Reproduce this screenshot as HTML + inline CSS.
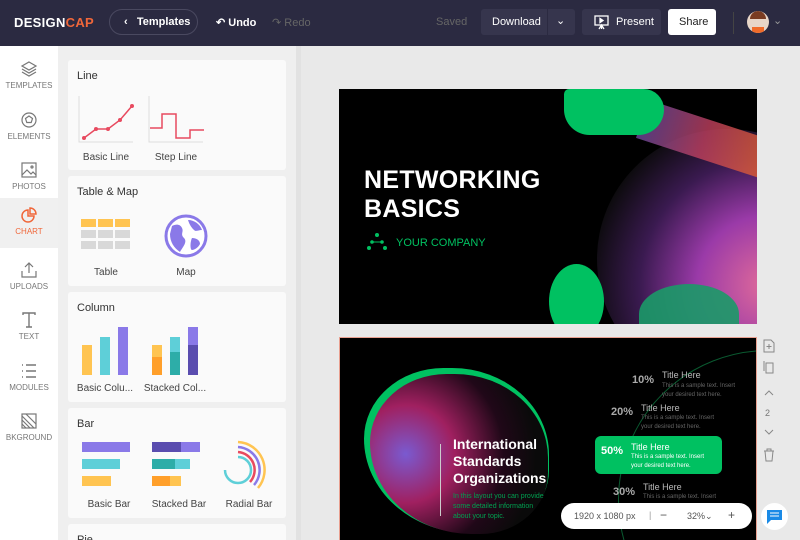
<!DOCTYPE html>
<html style="overflow:hidden"><head><meta charset="utf-8"><style>
*{box-sizing:border-box;margin:0;padding:0}
body{width:800px;height:540px;overflow:hidden;font-family:"Liberation Sans",sans-serif;background:#e9e9e9;position:relative}
.top{position:absolute;left:0;top:0;width:800px;height:46px;background:#2b2a41;color:#fff;font-size:11px}
.top>*{position:absolute}
.side{position:absolute;left:0;top:46px;width:58px;height:494px;background:#fff}
.si{position:absolute;left:0;width:58px;height:50px;text-align:center;font-size:8px;color:#777}
.si svg{display:block;margin:8px auto 3px}
.panel{position:absolute;left:58px;top:46px;width:238px;height:494px;background:#efefef;overflow:hidden}
.card{position:absolute;left:10px;width:218px;background:#fafafa;border-radius:3px}
.card h4{font-weight:normal;font-size:11px;color:#333;position:absolute;left:9px;top:10px}
.lab{position:absolute;font-size:10px;color:#444;text-align:center;width:70px}
.abs{position:absolute}
</style></head><body>
<div class="top">
 <div style="left:14px;top:15px;font-size:13px;font-weight:bold;letter-spacing:0.3px">DESIGN<span style="color:#f0673a">CAP</span></div>
 <div style="left:109px;top:9px;width:89px;height:26px;border:1px solid #4a4960;border-radius:13px;padding:6px 0 0 14px;font-weight:bold">‹&nbsp;&nbsp;&nbsp;Templates</div>
 <div style="left:216px;top:16px;font-weight:bold">↶ Undo</div>
 <div style="left:272px;top:16px;color:#666">↷ Redo</div>
 <div style="left:436px;top:16px;color:#666">Saved</div>
 <div style="left:481px;top:9px;width:94px;height:26px;background:#36354d;border-radius:3px;padding:7px 0 0 11px">Download<span style="position:absolute;left:66px;top:0;width:1px;height:26px;background:#2b2a41"></span><span style="position:absolute;left:75px;top:5px">⌄</span></div>
 <div style="left:582px;top:9px;width:79px;height:26px;background:#36354d;border-radius:3px;padding:7px 0 0 34px">Present<svg style="position:absolute;left:12px;top:6px" width="15" height="15" viewBox="0 0 15 15" fill="none" stroke="#fff" stroke-width="1.3"><rect x="1" y="1" width="13" height="9"/><path d="M6 3.5v4l3-2z" fill="#fff"/><path d="M7.5 10v4M5 14l2.5-4 2.5 4"/></svg></div>
 <div style="left:668px;top:9px;width:48px;height:26px;background:#fff;color:#222;border-radius:3px;padding:7px 0 0 11px">Share</div>
 <div style="left:733px;top:12px;width:1px;height:22px;background:#444"></div>
 <div style="left:747px;top:11px;width:22px;height:22px;border-radius:50%;background:#e8d6c8;overflow:hidden"><div style="position:absolute;left:3px;top:0;width:16px;height:8px;background:#7a3c22;border-radius:8px 8px 0 0"></div><div style="position:absolute;left:5px;top:16px;width:12px;height:8px;background:#f06b2a"></div></div>
 <div style="left:773px;top:14px;color:#999">⌄</div>
</div>
<div class="side">
 <div class="si" style="top:6px"><svg width="18" height="18" viewBox="0 0 18 18" fill="none" stroke="#777" stroke-width="1.2"><path d="M9 2l7 4-7 4-7-4z M2 9l7 4 7-4 M2 12l7 4 7-4"/></svg>TEMPLATES</div>
 <div class="si" style="top:57px"><svg width="18" height="18" viewBox="0 0 18 18" fill="none" stroke="#777" stroke-width="1.2"><circle cx="9" cy="9" r="7"/><path d="M9 5l3.5 2.5-1.3 4H6.8L5.5 7.5z"/></svg>ELEMENTS</div>
 <div class="si" style="top:107px"><svg width="18" height="18" viewBox="0 0 18 18" fill="none" stroke="#777" stroke-width="1.2"><rect x="2" y="2" width="14" height="14"/><path d="M2 14l5-5 4 4 2-2 3 3"/><circle cx="12" cy="6" r="1"/></svg>PHOTOS</div>
 <div class="si" style="top:152px;height:50px;background:#f0f0f0;color:#f0673a"><svg width="18" height="18" viewBox="0 0 18 18" fill="none" stroke="#f0673a" stroke-width="1.5"><path d="M8 4a6 6 0 1 0 6 6H8z"/><path d="M10 2a6 6 0 0 1 6 6h-6z"/></svg>CHART</div>
 <div class="si" style="top:207px"><svg width="18" height="18" viewBox="0 0 18 18" fill="none" stroke="#777" stroke-width="1.2"><path d="M9 12V2M5 6l4-4 4 4M2 10v6h14v-6"/></svg>UPLOADS</div>
 <div class="si" style="top:257px"><svg width="18" height="18" viewBox="0 0 18 18" fill="none" stroke="#777" stroke-width="1.4"><path d="M3 4V2h12v2M9 2v14M6 16h6"/></svg>TEXT</div>
 <div class="si" style="top:308px"><svg width="18" height="18" viewBox="0 0 18 18" fill="none" stroke="#777" stroke-width="1.4"><path d="M6 3h10M6 9h10M6 15h10M2 3h1M2 9h1M2 15h1"/></svg>MODULES</div>
 <div class="si" style="top:358px"><svg width="18" height="18" viewBox="0 0 18 18" fill="none" stroke="#777" stroke-width="1.2"><rect x="2" y="2" width="14" height="14"/><path d="M2 8l8 8M2 12l4 4M2 4l12 12M6 2l10 10"/></svg>BKGROUND</div>
</div>
<div class="panel">
 <div class="card" style="top:14px;height:110px"><h4>Line</h4>
  <svg class="abs" style="left:10px;top:36px" width="60" height="50"><path d="M1 0v46h54" stroke="#ddd" fill="none"/><path d="M6 42l12-9 12 0 12-9 12-14" stroke="#e84a5f" stroke-width="1.5" fill="none"/><g fill="#e84a5f"><circle cx="6" cy="42" r="2"/><circle cx="18" cy="33" r="2"/><circle cx="30" cy="33" r="2"/><circle cx="42" cy="24" r="2"/><circle cx="54" cy="10" r="2"/></g></svg>
  <svg class="abs" style="left:80px;top:36px" width="60" height="50"><path d="M1 0v46h54" stroke="#ddd" fill="none"/><path d="M2 32h12V18h14v24h14v-8h14" stroke="#e84a5f" stroke-width="1.5" fill="none"/></svg>
  <div class="lab" style="left:3px;top:92px">Basic Line</div><div class="lab" style="left:73px;top:92px">Step Line</div></div>
 <div class="card" style="top:130px;height:110px"><h4>Table &amp; Map</h4>
  <svg class="abs" style="left:13px;top:43px" width="52" height="35"><g fill="#ffc451"><rect x="0" y="0" width="15" height="8"/><rect x="17" y="0" width="15" height="8"/><rect x="34" y="0" width="15" height="8"/></g><g fill="#d8d8d8"><rect x="0" y="11" width="15" height="8"/><rect x="17" y="11" width="15" height="8"/><rect x="34" y="11" width="15" height="8"/><rect x="0" y="22" width="15" height="8"/><rect x="17" y="22" width="15" height="8"/><rect x="34" y="22" width="15" height="8"/></g></svg>
  <svg class="abs" style="left:96px;top:38px" width="44" height="44" viewBox="0 0 44 44"><circle cx="22" cy="22" r="20" fill="#fff" stroke="#8a79e8" stroke-width="3"/><path d="M8 12c4-2 8-2 10 2s-2 6 2 10-2 10-4 14c-6-4-10-10-10-18zM24 6c6 0 12 4 14 10-4 0-6 2-8 0s-4-4-6-10zM28 24c4 0 8 2 8 6-2 4-6 6-8 6s-2-8 0-12z" fill="#8a79e8"/></svg>
  <div class="lab" style="left:3px;top:91px">Table</div><div class="lab" style="left:83px;top:91px">Map</div></div>
 <div class="card" style="top:246px;height:110px"><h4>Column</h4>
  <svg class="abs" style="left:14px;top:35px" width="50" height="50"><rect x="0" y="18" width="10" height="30" fill="#ffc451"/><rect x="18" y="10" width="10" height="38" fill="#5ecfd8"/><rect x="36" y="0" width="10" height="48" fill="#8a79e8"/></svg>
  <svg class="abs" style="left:84px;top:35px" width="50" height="50"><rect x="0" y="18" width="10" height="12" fill="#ffc451"/><rect x="0" y="30" width="10" height="18" fill="#ff9f2a"/><rect x="18" y="10" width="10" height="15" fill="#5ecfd8"/><rect x="18" y="25" width="10" height="23" fill="#2dada8"/><rect x="36" y="0" width="10" height="18" fill="#8a79e8"/><rect x="36" y="18" width="10" height="30" fill="#5a4daf"/></svg>
  <div class="lab" style="left:2px;top:91px">Basic Colu...</div><div class="lab" style="left:72px;top:91px">Stacked Col...</div></div>
 <div class="card" style="top:362px;height:110px"><h4>Bar</h4>
  <svg class="abs" style="left:14px;top:34px" width="50" height="50"><rect x="0" y="0" width="48" height="10" fill="#8a79e8"/><rect x="0" y="17" width="38" height="10" fill="#5ecfd8"/><rect x="0" y="34" width="29" height="10" fill="#ffc451"/></svg>
  <svg class="abs" style="left:84px;top:34px" width="50" height="50"><rect x="0" y="0" width="29" height="10" fill="#5a4daf"/><rect x="29" y="0" width="19" height="10" fill="#8a79e8"/><rect x="0" y="17" width="23" height="10" fill="#2dada8"/><rect x="23" y="17" width="15" height="10" fill="#5ecfd8"/><rect x="0" y="34" width="18" height="10" fill="#ff9f2a"/><rect x="18" y="34" width="11" height="10" fill="#ffc451"/></svg>
  <svg class="abs" style="left:154px;top:32px" width="50" height="50" viewBox="0 0 50 50" fill="none" stroke-width="2.5"><path d="M16 2a28 28 0 0 1 20 46" stroke="#ffc451"/><path d="M16 7a23 23 0 0 1 16 38" stroke="#8a79e8"/><path d="M16 12a18 18 0 0 1 12 30" stroke="#e84a5f"/><path d="M16 17a13 13 0 1 1 -13 13" stroke="#5ecfd8"/></svg>
  <div class="lab" style="left:6px;top:91px">Basic Bar</div><div class="lab" style="left:76px;top:91px">Stacked Bar</div><div class="lab" style="left:146px;top:91px">Radial Bar</div></div>
 <div class="card" style="top:478px;height:30px"><h4>Pie</h4></div>
</div>
<div class="abs" style="left:296px;top:46px;width:5px;height:494px;background:#e2e2e2"></div>
<!-- slide 1 -->
<div class="abs" style="left:339px;top:89px;width:418px;height:235px;background:#000;overflow:hidden">
 <div class="abs" style="left:258px;top:40px;width:260px;height:260px;border-radius:50%;background:radial-gradient(circle at 65% 60%,#e06a9a 0%,#9a3aa8 30%,#3a1a50 55%,#0a0a0a 78%)"></div>
 <div class="abs" style="left:300px;top:30px;width:130px;height:40px;background:linear-gradient(90deg,#6a4aa0,#c04060,#e06030);transform:rotate(18deg);opacity:.8"></div>
 <div class="abs" style="left:225px;top:0;width:100px;height:46px;border-radius:10px 40px 50px 50px;background:#00c161"></div>
 <div class="abs" style="left:210px;top:175px;width:55px;height:75px;border-radius:50%;background:#00c161"></div>
 <div class="abs" style="left:300px;top:195px;width:100px;height:60px;border-radius:50% 50% 0 0;background:#1b9a68;opacity:.9"></div>
 <div class="abs" style="left:25px;top:77px;color:#fff;font-weight:bold;font-size:25px;line-height:29px;letter-spacing:0.3px">NETWORKING<br>BASICS</div>
 <svg class="abs" style="left:27px;top:143px" width="22" height="20" fill="#00c161"><circle cx="11" cy="3" r="2"/><circle cx="3" cy="16" r="2"/><circle cx="19" cy="16" r="2"/><circle cx="6" cy="10" r="1.8"/><circle cx="16" cy="10" r="1.8"/><path d="M6 10h10" stroke="#00c161"/></svg>
 <div class="abs" style="left:57px;top:148px;color:#00c161;font-size:11px">YOUR COMPANY</div>
</div>
<!-- slide 2 -->
<div class="abs" style="left:339px;top:337px;width:418px;height:203px;background:#000;overflow:hidden;border:1px solid #e9a090;border-bottom:none">
 <div class="abs" style="left:278px;top:12px;width:300px;height:300px;border-radius:50%;border:1px solid #0a5a30"></div>
 <div class="abs" style="left:24px;top:30px;width:185px;height:165px;border-radius:45% 55% 40% 60%;background:#00c161"></div>
 <div class="abs" style="left:30px;top:36px;width:178px;height:160px;border-radius:45% 55% 40% 60%;background:radial-gradient(circle at 20% 50%,#7a5ad0 0%,#a02060 30%,#200818 60%,#0a0a0a 80%)"></div>
 <div class="abs" style="left:100px;top:106px;width:1px;height:72px;background:#ccc"></div>
 <div class="abs" style="left:113px;top:98px;color:#fff;font-weight:bold;font-size:14px;line-height:17px">International<br>Standards<br>Organizations</div>
 <div class="abs" style="left:113px;top:154px;color:#00a050;font-size:7px;line-height:10px">In this layout you can provide<br>some detailed information<br>about your topic.</div>
 <div class="abs" style="left:255px;top:98px;width:127px;height:38px;border-radius:6px;background:#00c161"></div>
 <div class="abs" style="left:292px;top:36px;color:#aaa;font-weight:bold;font-size:11px">10%</div><div class="abs" style="left:322px;top:32px;color:#bbb;font-size:9px">Title Here</div><div class="abs" style="left:322px;top:44px;color:#666;font-size:6px;line-height:9px">This is a sample text. Insert<br>your desired text here.</div>
 <div class="abs" style="left:271px;top:68px;color:#aaa;font-weight:bold;font-size:11px">20%</div><div class="abs" style="left:301px;top:65px;color:#bbb;font-size:9px">Title Here</div><div class="abs" style="left:301px;top:76px;color:#666;font-size:6px;line-height:9px">This is a sample text. Insert<br>your desired text here.</div>
 <div class="abs" style="left:261px;top:107px;color:#fff;font-weight:bold;font-size:11px">50%</div><div class="abs" style="left:291px;top:104px;color:#fff;font-size:9px">Title Here</div><div class="abs" style="left:291px;top:115px;color:#fff;font-size:6px;line-height:9px">This is a sample text. Insert<br>your desired text here.</div>
 <div class="abs" style="left:273px;top:148px;color:#aaa;font-weight:bold;font-size:11px">30%</div><div class="abs" style="left:303px;top:144px;color:#bbb;font-size:9px">Title Here</div><div class="abs" style="left:303px;top:156px;color:#666;font-size:6px">This is a sample text. Insert</div>
</div>
<!-- right tools -->
<svg class="abs" style="left:762px;top:339px" width="14" height="130" fill="none" stroke="#888" stroke-width="1"><path d="M2 1h7l3 3v9H2z M7 5v5M4.5 7.5h5"/><path d="M4 24h7v10H4z M2 22v10"/><path d="M3 56l4-4 4 4"/><path d="M3 91l4 4 4-4"/><path d="M2 112h10M5 112v-2h4v2M3 112l1 10h6l1-10"/></svg>
<div class="abs" style="left:765px;top:408px;font-size:9px;color:#777">2</div>
<div class="abs" style="left:561px;top:503px;width:191px;height:26px;background:#fff;border-radius:13px;font-size:9px;color:#555">
 <span class="abs" style="left:13px;top:8px">1920 x 1080 px</span><span class="abs" style="left:88px;top:7px;color:#999">|</span><span class="abs" style="left:99px;top:5px;font-size:12px">−</span><span class="abs" style="left:126px;top:8px">32%⌄</span><span class="abs" style="left:167px;top:5px;font-size:12px">+</span></div>
<div class="abs" style="left:761px;top:503px;width:27px;height:27px;border-radius:50%;background:#fff"><svg class="abs" style="left:6px;top:7px" width="15" height="14"><path d="M0 0h15v10H4l-4 4z" fill="#1a8ae6"/><path d="M3 3h9M3 6h9" stroke="#fff"/></svg></div>
</body></html>
